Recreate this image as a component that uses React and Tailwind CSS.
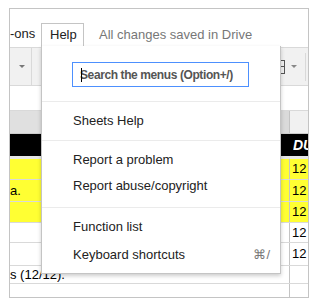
import React from "react";

const rows = [
  { h: "h-[21px]", bg: "bg-[#ffff33]", left: "", right: "12" },
  { h: "h-[22px]", bg: "bg-[#ffff33]", left: "a.", right: "12" },
  { h: "h-[21px]", bg: "bg-[#ffff33]", left: "", right: "12" },
  { h: "h-[20px]", bg: "bg-white", left: "", right: "12" },
  { h: "h-[23px]", bg: "bg-white", left: "", right: "12" },
  { h: "h-[18px]", bg: "bg-white", left: "s (12/12).", right: "" },
  { h: "h-[18px]", bg: "bg-white", left: "", right: "" },
];

export default function App() {
  return (
    <div className="relative w-[318px] h-[305px] bg-white overflow-hidden font-['Liberation_Sans',Arial,sans-serif] text-[13px] text-[#222]">
      <div className="ml-[9px] mt-[8px] w-[300px] h-[290px] border border-[#c4c4c4] flex flex-col overflow-hidden">
        {/* menu bar */}
        <div className="h-[38px] flex items-end shrink-0">
          <div className="h-[24px] w-[31px] flex items-center pb-[2px] text-[13px] text-[#222]">-ons</div>
          <div className="h-[24px] w-[43px] border border-b-0 border-[#c4c4c4] flex items-center pb-[1px] pl-[8px] text-[13px] text-[#222] bg-white">
            Help
          </div>
          <div className="h-[24px] flex items-center pb-[1px] pl-[15px] text-[13px] text-[#777] whitespace-nowrap">
            All changes saved in Drive
          </div>
        </div>
        {/* toolbar */}
        <div className="h-[39px] shrink-0 bg-[#f1f1f1] border-t border-b border-[#d9d9d9] flex items-center">
          <div className="w-[22px] h-full border-r border-[#d9d9d9] flex items-center justify-center">
            <div className="w-0 h-0 border-l-[3px] border-r-[3px] border-t-[3px] border-l-transparent border-r-transparent border-t-[#777] ml-[2px]" />
          </div>
          <div className="flex-1" />
          <div className="w-[10px] h-[14px] border border-l-0 border-[#555] mr-[6px] relative">
            <div className="absolute left-0 right-0 top-[5px] border-t border-[#555]" />
          </div>
          <div className="w-0 h-0 border-l-[3px] border-r-[3px] border-t-[3px] border-l-transparent border-r-transparent border-t-[#888] mr-[8px]" />
          <div className="w-[3px] h-[28px] border-l border-[#d9d9d9]" />
        </div>
        {/* blank row */}
        <div className="h-[25px] shrink-0 border-b border-[#d9d9d9] bg-white" />
        {/* header row */}
        <div className="h-[23px] shrink-0 flex border-b border-[#ccc]">
          <div className="flex-1 bg-[#e0e0e0]" />
          <div className="w-[9px] bg-[#dadada] border-r border-[#c4c4c4]" />
          <div className="w-[18px] bg-[#f1f1f1]" />
        </div>
        {/* black row */}
        <div className="h-[25px] shrink-0 flex bg-black border-b-[3px] border-[#e6e6e6]">
          <div className="flex-1" />
          <div className="w-[15px] flex items-center text-white font-bold italic text-[14px] leading-none overflow-hidden">DU</div>
        </div>
        {rows.map((r, i) => (
          <div key={i} className={`${r.h} shrink-0 flex border-b border-[#d9d9d9] ${r.bg}`}>
            <div className="flex-1 flex items-center text-[13px] text-black whitespace-nowrap">{r.left}</div>
            <div className="w-[19px] h-full border-l border-[#c4c4c4] flex items-center pl-[2px] text-[13px] text-black">
              {r.right}
            </div>
          </div>
        ))}
      </div>

      {/* dropdown menu */}
      <div className="absolute left-[41px] top-[46px] w-[240px] h-[228px] bg-white border border-t-0 border-[#c4c4c4] shadow-[0_2px_4px_rgba(0,0,0,0.2)]">
        <div className="pt-[16px] pb-[14px] border-b border-[#ebebeb]">
          <div className="ml-[30px] w-[177px] h-[25px] border border-[#4d90fe] flex items-center pl-[7px] relative">
            <div className="absolute left-[8px] top-[5px] h-[14px] w-px bg-black" />
            <span className="text-[12px] font-bold text-[#555] whitespace-nowrap tracking-[-0.4px]">Search the menus (Option+/)</span>
          </div>
        </div>
        <div className="py-[6px] border-b border-[#ebebeb]">
          <div className="h-[26px] flex items-center pl-[31px]">Sheets Help</div>
        </div>
        <div className="pt-[6px] pb-[8px] border-b border-[#ebebeb]">
          <div className="h-[26px] flex items-center pl-[31px]">Report a problem</div>
          <div className="h-[26px] flex items-center pl-[31px]">Report abuse/copyright</div>
        </div>
        <div className="pt-[6px]">
          <div className="h-[26px] flex items-center pl-[31px]">Function list</div>
          <div className="h-[28px] mt-[1px] flex items-center pl-[31px] pr-[10px]">
            <span className="flex-1">Keyboard shortcuts</span>
            <span className="text-[#777]">⌘/</span>
          </div>
        </div>
      </div>
    </div>
  );
}
